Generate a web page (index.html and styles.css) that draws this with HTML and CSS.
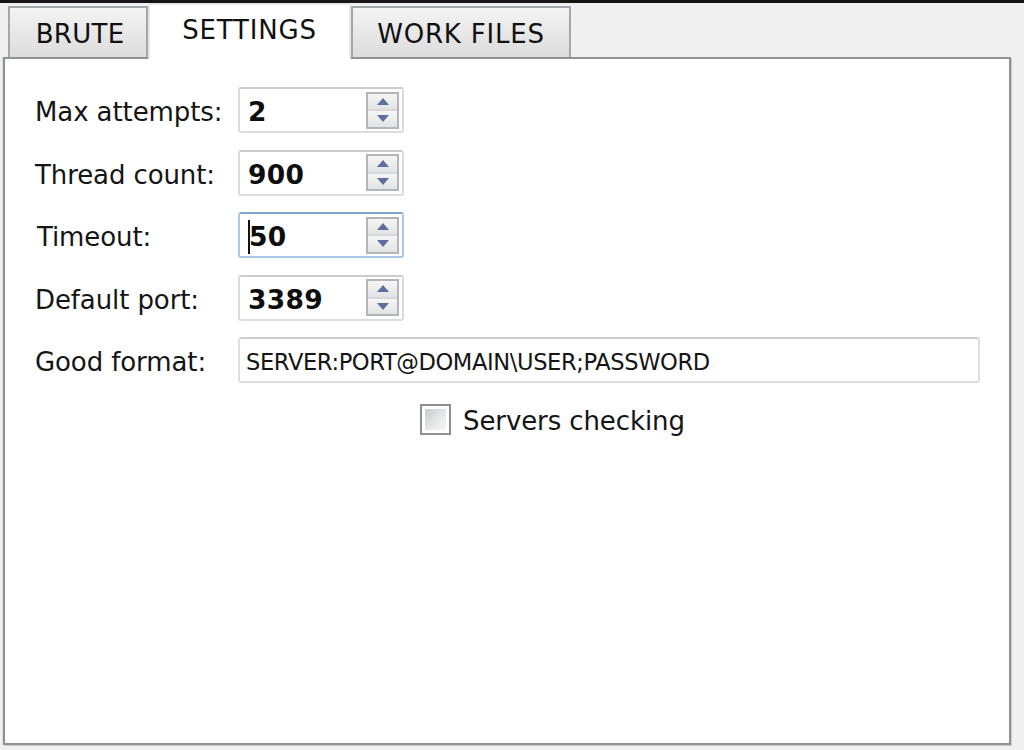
FILE: index.html
```html
<!DOCTYPE html>
<html>
<head>
<meta charset="utf-8">
<link rel="stylesheet" href="styles.css">
</head>
<body>
<div class="topbar"></div>
<div class="window">
  <div class="tabs">
    <div class="tab tab-brute">BRUTE</div>
    <div class="tab tab-settings active">SETTINGS</div>
    <div class="tab tab-work">WORK FILES</div>
  </div>
  <div class="panel">
    <div class="form">
      <div class="label">Max attempts:</div>
      <div class="spin">
        <span class="value">2</span>
        <div class="spin-btns">
          <div class="spin-btn"><svg width="12" height="7" viewBox="0 0 12 7"><path d="M0 7 L6 0 L12 7 Z" fill="#5b6fa0"/></svg></div>
          <div class="spin-btn"><svg width="12" height="7" viewBox="0 0 12 7"><path d="M0 0 L6 7 L12 0 Z" fill="#5b6fa0"/></svg></div>
        </div>
      </div>

      <div class="label">Thread count:</div>
      <div class="spin">
        <span class="value">900</span>
        <div class="spin-btns">
          <div class="spin-btn"><svg width="12" height="7" viewBox="0 0 12 7"><path d="M0 7 L6 0 L12 7 Z" fill="#5b6fa0"/></svg></div>
          <div class="spin-btn"><svg width="12" height="7" viewBox="0 0 12 7"><path d="M0 0 L6 7 L12 0 Z" fill="#5b6fa0"/></svg></div>
        </div>
      </div>

      <div class="label label-timeout">Timeout:</div>
      <div class="spin focused">
        <span class="value"><span class="caret"></span>50</span>
        <div class="spin-btns">
          <div class="spin-btn"><svg width="12" height="7" viewBox="0 0 12 7"><path d="M0 7 L6 0 L12 7 Z" fill="#5b6fa0"/></svg></div>
          <div class="spin-btn"><svg width="12" height="7" viewBox="0 0 12 7"><path d="M0 0 L6 7 L12 0 Z" fill="#5b6fa0"/></svg></div>
        </div>
      </div>

      <div class="label">Default port:</div>
      <div class="spin">
        <span class="value">3389</span>
        <div class="spin-btns">
          <div class="spin-btn"><svg width="12" height="7" viewBox="0 0 12 7"><path d="M0 7 L6 0 L12 7 Z" fill="#5b6fa0"/></svg></div>
          <div class="spin-btn"><svg width="12" height="7" viewBox="0 0 12 7"><path d="M0 0 L6 7 L12 0 Z" fill="#5b6fa0"/></svg></div>
        </div>
      </div>

      <div class="label">Good format:</div>
      <div class="textbox">SERVER:PORT@DOMAIN\USER;PASSWORD</div>

      <div class="check-row">
        <span class="checkbox"><span class="checkbox-inner"></span></span>
        <span class="check-label">Servers checking</span>
      </div>
    </div>
  </div>
</div>
</body>
</html>
```

FILE: styles.css
```css
html, body {
  margin: 0;
  padding: 0;
}
body {
  background: #f0f0f0;
  font-family: "DejaVu Sans", "Liberation Sans", sans-serif;
  color: #151515;
  width: 1024px;
  height: 750px;
  overflow: hidden;
}
.topbar {
  height: 3px;
  background: #141414;
}
.window {
  padding: 0 13px 0 3px;
}
.tabs {
  display: flex;
  align-items: flex-end;
  height: 54px;
  padding-left: 5px;
}
.tab {
  box-sizing: border-box;
  height: 51px;
  border: 2px solid #a3a6aa;
  border-bottom: none;
  background: linear-gradient(#f4f4f4, #e9e9e9 45%, #dcdcdc);
  font-size: 26px;
  letter-spacing: 0.3px;
  display: flex;
  align-items: center;
  justify-content: center;
  padding-top: 2px;
  color: #111;
}
.tab-brute { width: 140px; padding-left: 4px; }
.tab-settings { width: 203px; }
.tab-work { width: 220px; letter-spacing: 0.8px; }
.tab.active {
  height: 56px;
  margin-bottom: -2px;
  background: #ffffff;
  border-color: #e4e6e8;
  position: relative;
  z-index: 1;
  letter-spacing: 0.8px;
  padding-top: 0;
  padding-bottom: 4px;
}
.tab-brute { border-right: 2px solid #a3a6aa; }
.tab-work { border-left: 2px solid #a3a6aa; }
.panel {
  box-sizing: border-box;
  height: 688px;
  background: #ffffff;
  border: 2px solid #8f9398;
  box-shadow: 1px 1px 0 #c9cbcd, -1px 0 0 #dcdcdc;
  padding: 28px 0 0 30px;
}
.form {
  display: grid;
  grid-template-columns: 203px 742px;
  grid-auto-rows: 46px;
  row-gap: 16.5px;
  align-items: center;
}
.label {
  font-size: 26px;
  line-height: 46px;
  padding-top: 4px;
  letter-spacing: -0.1px;
}
.label-timeout { padding-left: 2px; }
.spin {
  box-sizing: border-box;
  width: 166px;
  height: 46px;
  border: 2px solid #dadcdf;
  border-top-color: #c9cbce;
  border-radius: 3px;
  display: flex;
  align-items: center;
  justify-content: space-between;
  padding: 0 3px 0 8px;
  background: #fff;
}
.spin.focused {
  border-color: #a9c7e6;
  border-top-color: #7ea6d2;
}
.value {
  font-weight: bold;
  font-size: 26.5px;
  color: #0e0e0e;
  display: flex;
  align-items: center;
  padding-top: 3px;
  letter-spacing: 0.3px;
}
.caret {
  display: inline-block;
  width: 2px;
  height: 34px;
  background: #111;
  margin-right: -1px;
}
.spin-btns {
  box-sizing: border-box;
  width: 33px;
  height: 37px;
  border: 2px solid #b3b5b8;
  display: flex;
  flex-direction: column;
  background: #d6d8da;
  gap: 2px;
}
.spin-btn {
  flex: 1;
  display: flex;
  align-items: center;
  justify-content: center;
  background: linear-gradient(#f6f6f6, #e2e3e4);
}
.textbox {
  box-sizing: border-box;
  height: 46px;
  width: 742px;
  border: 2px solid #dcdee1;
  border-top-color: #cbcdd0;
  border-radius: 3px;
  font-size: 22.6px;
  letter-spacing: -0.4px;
  display: flex;
  align-items: center;
  padding: 3px 0 0 6px;
  color: #151515;
}
.check-row {
  grid-column: 2;
  display: flex;
  align-items: center;
  margin-left: 182px;
  margin-top: -6px;
}
.checkbox {
  box-sizing: border-box;
  width: 31px;
  height: 31px;
  border: 2px solid #8e9092;
  padding: 3px;
  background: #fff;
  display: inline-block;
}
.checkbox-inner {
  display: block;
  width: 100%;
  height: 100%;
  background: linear-gradient(135deg, #c9cacc, #e8e9ea 60%, #f5f5f5);
}
.check-label {
  font-size: 26px;
  margin-left: 12px;
  letter-spacing: -0.1px;
  padding-top: 2px;
}
```
